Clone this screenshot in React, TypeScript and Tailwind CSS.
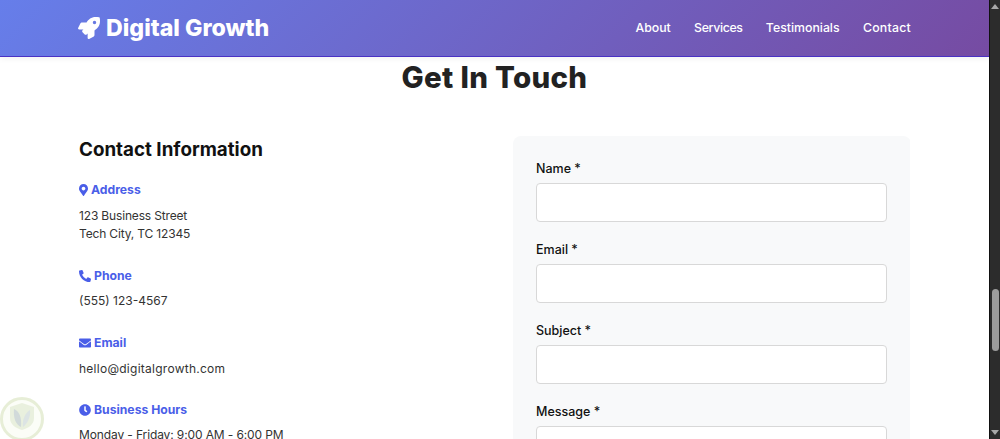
import { FaRocket, FaMapMarkerAlt, FaPhoneAlt, FaEnvelope, FaClock } from 'react-icons/fa';
import type { ReactNode } from 'react';

const NAV_LINKS = [
  { label: 'About', className: '' },
  { label: 'Services', className: 'tracking-[-0.35px]' },
  { label: 'Testimonials', className: '' },
  { label: 'Contact', className: 'tracking-[0.25px]' },
];
const FIELDS = ['Name *', 'Email *', 'Subject *', 'Message *'];

function InfoBlock({ icon, title, children, className }: { icon: ReactNode; title: string; children: ReactNode; className: string }) {
  return (
    <div className={className}>
      <h4 className="flex h-[19px] items-center gap-[3px] text-[12.2px] font-bold text-[#4a5ee8]">
        {icon}
        {title}
      </h4>
      <div className="mt-[6px] text-[12px] leading-[18px] text-[#333]">{children}</div>
    </div>
  );
}

function Scrollbar() {
  return (
    <div className="relative flex w-[11px] shrink-0 flex-col items-center justify-between border-l border-[#111] bg-[#2c2c2c] py-[4px]">
      <div className="h-0 w-0 border-x-[4px] border-b-[5px] border-x-transparent border-b-[#a8a8a8]" />
      <div className="absolute top-[289px] left-[2px] h-[62px] w-[7px] rounded-full bg-[#9c9c9c]" />
      <div className="h-0 w-0 border-x-[4px] border-t-[5px] border-x-transparent border-t-[#a8a8a8]" />
    </div>
  );
}

export default function App() {
  return (
    <div className="relative flex h-[439px] w-[1000px] overflow-hidden bg-white font-['Inter',sans-serif]">
      <div className="flex min-w-0 flex-1 flex-col">
        <header className="h-[57px] shrink-0 border-b border-[#4a32c4] bg-[linear-gradient(135deg,#667eea_0%,#764ba2_100%)] shadow-[0_2px_6px_rgba(0,0,0,0.05)]">
          <div className="mx-[78px] flex h-full items-center justify-between">
            <div className="flex items-center gap-[6px] text-white">
              <FaRocket size={22} />
              <span className="text-[23.2px] font-extrabold">Digital Growth</span>
            </div>
            <nav className="flex gap-[23.3px] pt-[1px] text-[12.3px] font-medium text-white">
              {NAV_LINKS.map((link) => (
                <a key={link.label} className={link.className}>
                  {link.label}
                </a>
              ))}
            </nav>
          </div>
        </header>

        <main className="mx-[79px] flex-1 overflow-hidden">
          <h2 className="text-center text-[29.5px] leading-[40px] font-extrabold tracking-[0.3px] text-[#222]">Get In Touch</h2>

          <div className="mt-[39px] grid grid-cols-[398px_398px] gap-x-[36px]">
            <div>
              <h3 className="pt-[1px] text-[18.8px] leading-[26px] font-bold text-[#111]">Contact Information</h3>
              <InfoBlock className="mt-[18px]" icon={<FaMapMarkerAlt className="mt-[-2px] h-[12px] w-[9px]" />} title="Address">
                <p className="pt-[1px] tracking-[-0.16px]">123 Business Street</p>
                <p className="tracking-[-0.16px]">Tech City, TC 12345</p>
              </InfoBlock>
              <InfoBlock className="mt-[24px]" icon={<FaPhoneAlt className="mt-[-2px] h-[12px] w-[12px]" />} title="Phone">
                <p>(555) 123-4567</p>
              </InfoBlock>
              <InfoBlock className="mt-[24px]" icon={<FaEnvelope className="mt-[-2px] h-[12px] w-[12px]" />} title="Email">
                <p className="pt-[1px] tracking-[0.26px]">hello@digitalgrowth.com</p>
              </InfoBlock>
              <InfoBlock className="mt-[23px]" icon={<FaClock className="mt-[-2px] h-[12px] w-[12px]" />} title="Business Hours">
                <p className="tracking-[-0.12px]">Monday - Friday: 9:00 AM - 6:00 PM</p>
              </InfoBlock>
            </div>

            <form className="h-[400px] rounded-[8px] bg-[#f8f9fa] pt-[23px] pr-[24px] pl-[23px]">
              {FIELDS.map((field) => (
                <div key={field} className="mb-[18px]">
                  <label className="block h-[24px] text-[12.5px] leading-[19px] font-medium text-[#111]">{field}</label>
                  <input className="block h-[39px] w-full rounded-[4px] border border-[#d8d8d8] bg-white" />
                </div>
              ))}
            </form>
          </div>
        </main>
      </div>

      <Scrollbar />

      {/* watermark badge */}
      <svg className="absolute bottom-[-3px] left-0 opacity-80" width="46" height="46" viewBox="0 0 46 46" aria-hidden="true">
        <circle cx="22" cy="23" r="20.5" fill="#fbfdf6" stroke="#e2ebce" strokeWidth="3" />
        <path d="M22 7 L34 11 V22 C34 29 28 32 22 34 C16 32 10 29 10 22 V11 Z" fill="#e4edd6" />
        <path d="M14 13 C19 15 22 21 21 31 C16 29 13 22 14 13 Z" fill="#c6d2d2" />
        <path d="M30 14 C31 21 27 28 23 31 C22 24 25 17 30 14 Z" fill="#d4dede" />
      </svg>
    </div>
  );
}
